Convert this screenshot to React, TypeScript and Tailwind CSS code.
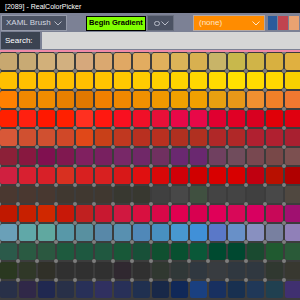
import React from "react";

const rows: string[][] = [
  ["#c8a870","#c8aa74","#d2b07a","#d2b080","#d6a87c","#daa870","#e0a864","#e2ac60","#e0b05c","#dcb458","#d8b050","#c8b468","#c8b84c","#d0b448","#d8b040","#e0b040"],
  ["#ffc000","#ffc000","#ffbe00","#ffc000","#ffbf00","#ffc400","#ffc800","#ffcc00","#ffd000","#ffd400","#ffd700","#ffda00","#ffe000","#ffdc00","#ffd800","#f8d000"],
  ["#ff8000","#f08800","#f08c00","#e88000","#e07800","#f08000","#f08800","#f09000","#f09800","#f0a000","#f0a000","#e8a010","#e89818","#f09030","#f08028","#f07830"],
  ["#ff2000","#ff2010","#ff1800","#ff2000","#ff3020","#ff1810","#f81020","#f01028","#e81038","#e80848","#e80848","#e00030","#e00025","#d80020","#e00008","#e00010"],
  ["#d85838","#d05030","#d05030","#d04828","#e04818","#c84018","#c03820","#b83020","#b83020","#b03020","#b03020","#b02828","#b02828","#b02030","#b02030","#a82030"],
  ["#8c2038","#881840","#801050","#801850","#802060","#782060","#782868","#702868","#703060","#6a2870","#6a2870","#704060","#704c5c","#784850","#784848","#7c5050"],
  ["#d02040","#d82030","#d82028","#d83020","#d82020","#d82020","#d81818","#e01010","#d80808","#d00008","#d00000","#d80000","#d80000","#c00010","#b81000","#b00000"],
  ["#4a3830","#4a3830","#483830","#403830","#403830","#403830","#383830","#383830","#404040","#484848","#405040","#444444","#444444","#404040","#484848","#504840"],
  ["#c01800","#c82000","#d02800","#c81808","#c02020","#c81830","#d01840","#d81040","#d80848","#e00050","#d80050","#e00058","#d80858","#d80060","#c80858","#a01070"],
  ["#6aa0b8","#60a8a8","#60a8a0","#5898a8","#5890a0","#5888a8","#5890b0","#5088b8","#4890c0","#4898d0","#4090d8","#5a78c8","#6890c8","#8890c0","#7880a0","#9080b8"],
  ["#2b5a4a","#2a5a42","#2b5840","#1e5a3e","#1e5840","#205840","#185838","#185038","#105030","#085030","#0a5838","#004a30","#004830","#1a4a30","#205a30","#2a5a38"],
  ["#2a3820","#303828","#303028","#303030","#303030","#303030","#302830","#303030","#303830","#303838","#303840","#383c40","#303840","#303840","#303830","#383830"],
  ["#283048","#302848","#202850","#283048","#283058","#303060","#283058","#203050","#182848","#102858","#1a4080","#183060","#183050","#203858","#204050","#403070"],
];

function Chevron({ className }: { className?: string }) {
  return (
    <svg width="8" height="5" viewBox="0 0 8 5" className={className}>
      <path d="M0.5 0.5 L4 4 L7.5 0.5" fill="none" stroke="currentColor" strokeWidth="1" />
    </svg>
  );
}

export default function App() {
  return (
    <div
      className="w-[300px] h-[300px] overflow-hidden bg-[#7c8195] flex flex-col"
      style={{ fontFamily: '"Liberation Sans", Arial, sans-serif' }}
    >
      {/* title bar */}
      <div className="h-[13px] bg-black text-white text-[7px] leading-[13px] pl-[5px] shrink-0">
        [2089] - RealColorPicker
      </div>

      {/* toolbar */}
      <div className="h-[19px] shrink-0 flex items-start pt-[2px]">
        <div className="ml-[1px] w-[66px] h-[16px] bg-[#4b5263] border border-[#959aaa] flex items-center justify-between pl-[4px] pr-[4px] text-[#d4d8e0] text-[8px]">
          <span>XAML Brush</span>
          <Chevron className="text-[#b8bcc8]" />
        </div>
        <div className="ml-[19px] w-[60px] h-[15px] mt-[0.5px] bg-[#80ff00] border border-black flex items-center justify-center text-black font-bold text-[7.5px]">
          Begin Gradient
        </div>
        <div className="ml-[1px] w-[27px] h-[16px] bg-[#4b5263] border border-[#6a7080] flex items-center justify-between pl-[6px] pr-[4px] text-[#b8bcc8]">
          <span className="w-[6px] h-[5px] rounded-full border border-[#b8bcc8]"></span>
          <Chevron />
        </div>
        <div className="ml-[19px] w-[72px] h-[16px] bg-[#ff8c00] border border-[#b4a8a4] flex items-center justify-between pl-[5px] pr-[4px] text-[#ffe6c8] text-[8px]">
          <span>(none)</span>
          <Chevron />
        </div>
        <div className="ml-[3px] mt-[1px] w-[9px] h-[14px] bg-[#2a5b9c]"></div>
        <div className="ml-[1px] mt-[1px] w-[10px] h-[14px] bg-[#c0444f]"></div>
        <div className="ml-[1px] mt-[1px] w-[10px] h-[14px] bg-[#e9a271]"></div>
      </div>

      {/* search row */}
      <div className="h-[17px] shrink-0 flex">
        <div className="ml-[1px] w-[39px] h-[17px] bg-[#3b4351] text-white text-[8px] leading-[17px] pl-[4px]">
          Search:
        </div>
        <div className="ml-[2px] flex-1 h-[17px] bg-[#d6d6d6]"></div>
      </div>

      <div className="h-[1px] shrink-0"></div>

      {/* color grid */}
      <div className="flex-1 bg-[#3c3c3c] border-t-2 border-[#f08aa8] pt-[1px] overflow-hidden">
        <div className="grid grid-cols-[repeat(16,17px)] auto-rows-[17px] gap-[2px]">
          {rows.flatMap((row, r) =>
            row.map((c, i) => (
              <div
                key={`${r}-${i}`}
                className="relative rounded-[2px]"
                style={{ backgroundColor: c }}
              >
                <span className="absolute -top-[3px] -left-[3px] w-[4px] h-[4px] rounded-full bg-[#7e7e7e] z-10"></span>
              </div>
            ))
          )}
        </div>
      </div>
    </div>
  );
}
